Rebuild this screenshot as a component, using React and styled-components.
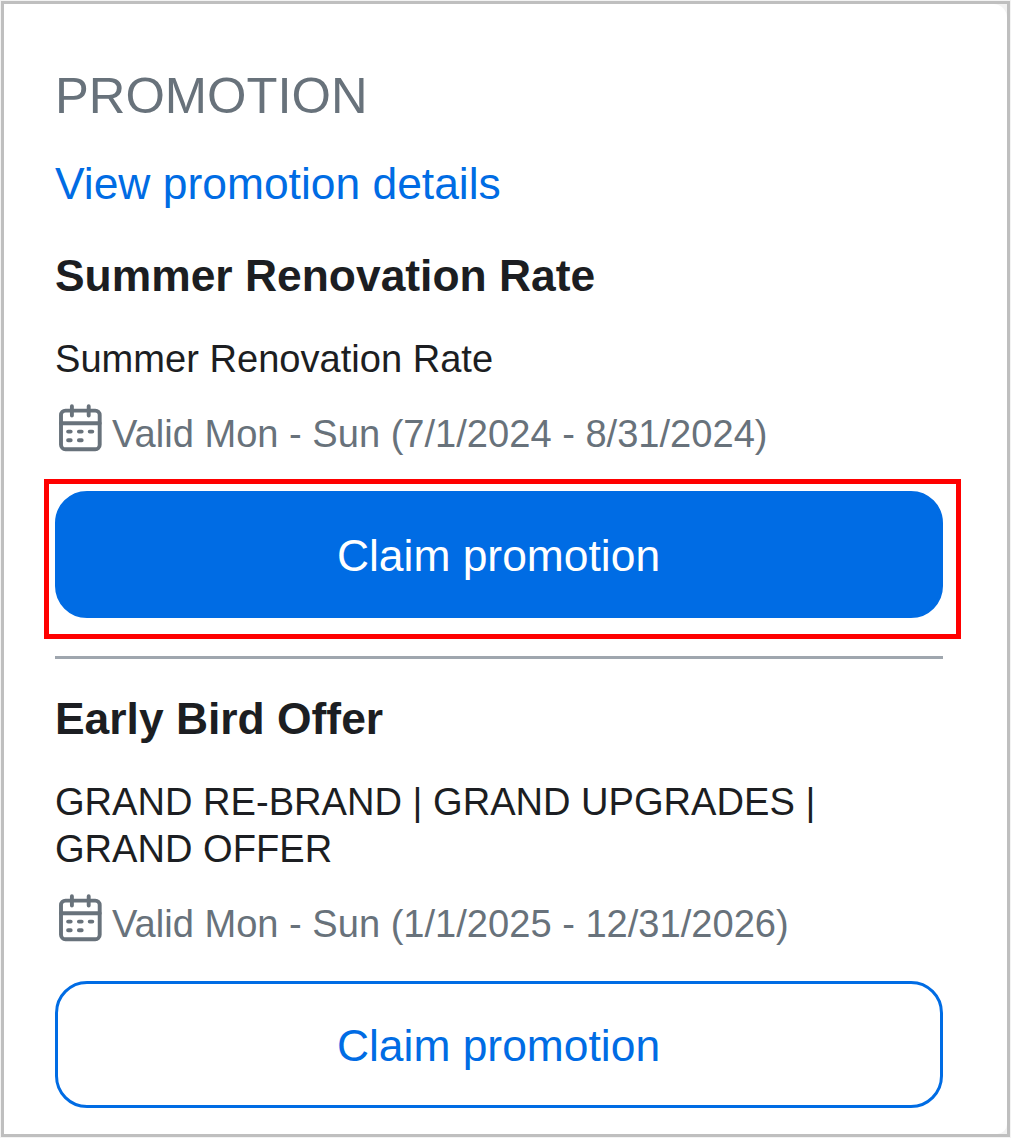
import React from "react";
import styled, { createGlobalStyle, css } from "styled-components";

const colors = {
  primary: "#006ce4",
  text: "#1c1e22",
  muted: "#68727b",
  divider: "#9fa6ae",
  frame: "#bfbfbf",
  page: "#f3f3f3",
  highlight: "#ff0000"
};

const GlobalStyle = createGlobalStyle`
  *, *::before, *::after {
    box-sizing: border-box;
  }

  body {
    margin: 0;
    background: ${colors.page};
    font-family: "Liberation Sans", Arial, sans-serif;
    color: ${colors.text};
  }
`;

const Frame = styled.div`
  width: 1009px;
  height: 1136px;
  margin: 1px;
  border: 3px solid ${colors.frame};
  background: ${colors.page};
  overflow: hidden;
`;

const Card = styled.section`
  height: 100%;
  padding: 62px 64px 0 51px;
  border-radius: 0 14px 10px 0;
  background: #fff;
`;

const Heading = styled.h2`
  margin: 0;
  font-size: 50.7px;
  font-weight: 400;
  line-height: 60px;
  color: ${colors.muted};
`;

const DetailsLink = styled.a`
  display: block;
  width: fit-content;
  margin: 30px 0 36px;
  font-size: 44.4px;
  line-height: 56px;
  color: ${colors.primary};
  text-decoration: none;
  cursor: pointer;
`;

const Offer = styled.article`
  & + & {
    margin-top: 38px;
    padding-top: 32px;
    border-top: 3px solid ${colors.divider};
  }
`;

const Title = styled.h3`
  margin: 0 0 32px;
  font-size: 44.4px;
  font-weight: 700;
  line-height: 56px;
`;

const Description = styled.p`
  max-width: 800px;
  margin: 0;
  font-size: 38.1px;
  line-height: 47.5px;
`;

const Validity = styled.div`
  display: flex;
  align-items: center;
  margin: 26px 0 33px;
  font-size: 38.1px;
  line-height: 48px;
  color: ${colors.muted};
`;

const Icon = styled.svg`
  flex: none;
  width: 50px;
  height: 50px;
  margin: -16px 7px 0 0;
  overflow: visible;
  fill: none;
  stroke: currentColor;
  stroke-width: 3.9;
  stroke-linecap: round;
`;

const ButtonWrapper = styled.div`
  position: relative;

  ${({ $highlighted }) =>
    $highlighted &&
    css`
      &::after {
        content: "";
        position: absolute;
        inset: -12px -18px -21px -11px;
        border: 5px solid ${colors.highlight};
        pointer-events: none;
      }
    `}
`;

const Button = styled.button`
  display: block;
  width: 100%;
  height: 127px;
  padding: 3px 1px 0 0;
  border: 3px solid ${colors.primary};
  border-radius: 32px;
  background: ${({ $filled }) => ($filled ? colors.primary : "#fff")};
  color: ${({ $filled }) => ($filled ? "#fff" : colors.primary)};
  font-family: inherit;
  font-size: 44.4px;
  line-height: 56px;
  cursor: pointer;
`;

const CalendarIcon = () => (
  <Icon viewBox="0 0 50 50" aria-hidden="true">
    <rect x="6" y="9.6" width="38.7" height="38.6" rx="4.5" />
    <path d="M6 22.3H44.7M16.9 5.2V14.6M33.7 5.2V14.6" />
    <path d="M13.1 30.6H15.7M23.9 30.6H26.7M34.7 30.6H37.3M13.1 39.2H15.7M23.9 39.2H26.7" />
  </Icon>
);

const offers = [
  {
    title: "Summer Renovation Rate",
    description: "Summer Renovation Rate",
    validity: "Valid Mon - Sun (7/1/2024 - 8/31/2024)",
    selected: true
  },
  {
    title: "Early Bird Offer",
    description: "GRAND RE-BRAND | GRAND UPGRADES | GRAND OFFER",
    validity: "Valid Mon - Sun (1/1/2025 - 12/31/2026)",
    selected: false
  }
];

const App = () => (
  <>
    <GlobalStyle />
    <Frame>
      <Card>
        <Heading>PROMOTION</Heading>
        <DetailsLink>View promotion details</DetailsLink>
        {offers.map(({ title, description, validity, selected }) => (
          <Offer key={title}>
            <Title>{title}</Title>
            <Description>{description}</Description>
            <Validity>
              <CalendarIcon />
              {validity}
            </Validity>
            <ButtonWrapper $highlighted={selected}>
              <Button $filled={selected}>Claim promotion</Button>
            </ButtonWrapper>
          </Offer>
        ))}
      </Card>
    </Frame>
  </>
);

export default App;
